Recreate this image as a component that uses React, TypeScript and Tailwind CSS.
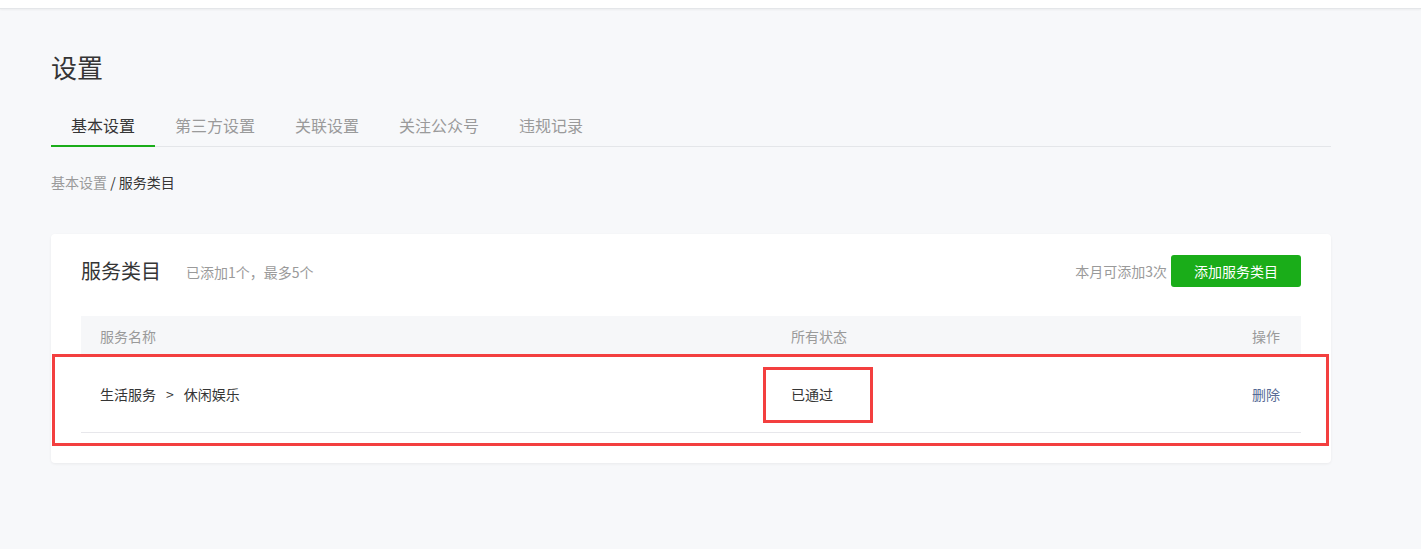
export default function App() {
    const tabs = ["基本设置", "第三方设置", "关联设置", "关注公众号", "违规记录"];

    return (
        <div className="min-h-screen bg-[#f7f8fa] text-[#353535]" style={{ fontFamily: '"Noto Sans CJK SC", "Noto Sans", sans-serif' }}>
            {/* top bar */}
            <div className="h-[9px] bg-white border-b border-[#e4e6e9] shadow-[0_1px_2px_rgba(0,0,0,0.05)]"></div>

            <div className="pl-[51px] w-[1331px]">
                <h1 className="mt-[40px] text-[26px] leading-[36px] font-normal">设置</h1>

                {/* tabs */}
                <div className="mt-[23px] flex border-b border-[#e4e6e9]">
                    {tabs.map((t, i) => (
                        <div
                            key={t}
                            className={`px-5 h-[39px] pb-[4px] flex items-center text-[16px] -mb-px border-b-2 ${i === 0 ? "border-[#1aad19] text-[#353535]" : "border-transparent text-[#9a9a9a]"}`}
                        >
                            {t}
                        </div>
                    ))}
                </div>

                {/* breadcrumb */}
                <div className="mt-[25px] text-[14px] leading-[20px]">
                    <span className="text-[#9a9a9a]">基本设置</span>
                    <span className="text-[#353535]"> / 服务类目</span>
                </div>

                {/* card */}
                <div className="relative mt-[42px] bg-white rounded-[4px] shadow-[0_1px_3px_rgba(0,0,0,0.06)] px-[30px] pb-[30px]">
                    <div className="h-[74px] flex items-center justify-between">
                        <div className="flex items-center">
                            <span className="text-[20px]">服务类目</span>
                            <span className="ml-[25px] text-[14px] text-[#9a9a9a] mt-[2px]">已添加1个，最多5个</span>
                        </div>
                        <div className="flex items-center">
                            <span className="text-[14px] text-[#9a9a9a] mr-[4px]">本月可添加3次</span>
                            <button className="w-[130px] h-[32px] rounded-[3px] bg-[#1aad19] text-white text-[14px]">添加服务类目</button>
                        </div>
                    </div>

                    <div className="mt-[8px]">
                        <div className="grid grid-cols-[691px_1fr_auto] items-center h-[40px] bg-[#f6f7f9] pl-[19px] pr-[21px] text-[14px] text-[#9a9a9a]">
                            <span>服务名称</span>
                            <span>所有状态</span>
                            <span>操作</span>
                        </div>
                        <div className="grid grid-cols-[691px_1fr_auto] items-center h-[77px] border-b border-[#e7e7eb] pl-[19px] pr-[21px] text-[14px]">
                            <span>
                                生活服务<span className="mx-[10px]">&gt;</span>休闲娱乐
                            </span>
                            <span>已通过</span>
                            <span className="text-[#576b95]">删除</span>
                        </div>
                    </div>

                    {/* annotation boxes */}
                    <div className="absolute left-[1px] top-[120px] w-[1277px] h-[92px] border-[3px] border-[#f33f3f] pointer-events-none"></div>
                    <div className="absolute left-[712px] top-[133px] w-[110px] h-[56px] border-[3px] border-[#f33f3f] pointer-events-none"></div>
                </div>
            </div>
        </div>
    );
}
